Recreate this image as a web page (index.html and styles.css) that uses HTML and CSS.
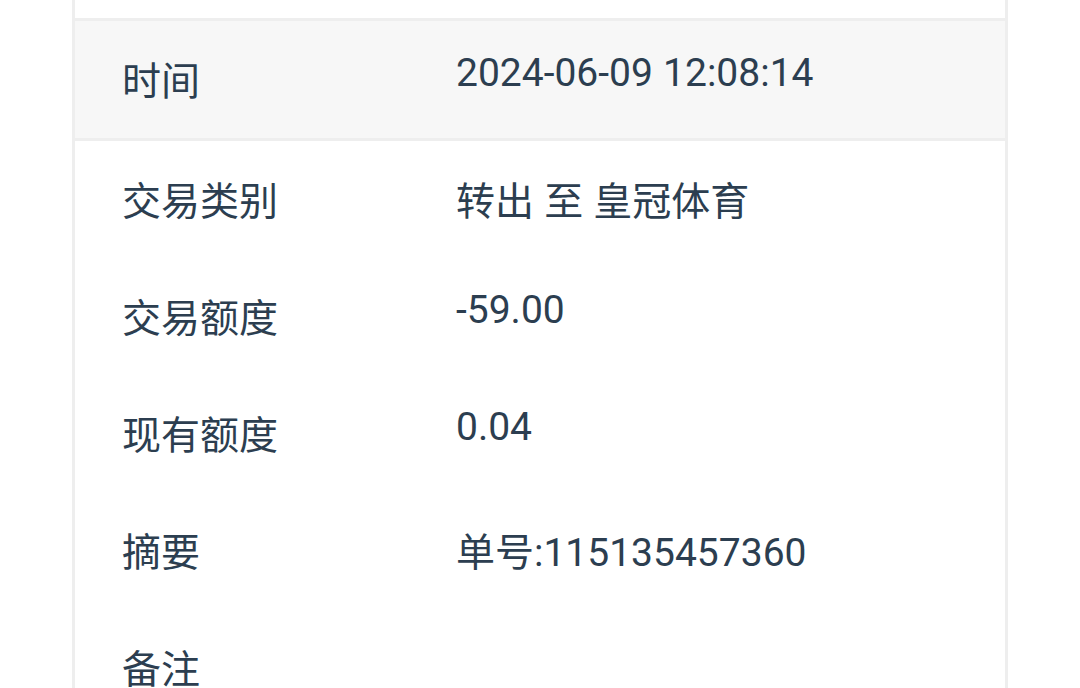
FILE: index.html
```html
<!DOCTYPE html>
<html lang="zh-CN">
<head>
<meta charset="utf-8">
<title>交易详情</title>
<link rel="stylesheet" href="styles.css">
</head>
<body>
<div class="card">
  <div class="top-gap"></div>
  <div class="row head"><div class="label">时间</div><div class="value">2024-06-09 12:08:14</div></div>
  <div class="row"><div class="label">交易类别</div><div class="value">转出 至 皇冠体育</div></div>
  <div class="row"><div class="label">交易额度</div><div class="value">-59.00</div></div>
  <div class="row"><div class="label">现有额度</div><div class="value">0.04</div></div>
  <div class="row"><div class="label">摘要</div><div class="value">单号:115135457360</div></div>
  <div class="row"><div class="label">备注</div><div class="value"></div></div>
</div>
</body>
</html>
```

FILE: styles.css
```css
html, body {
  margin: 0;
  padding: 0;
  background: #ffffff;
  overflow: hidden;
}

body {
  font-family: "Roboto", "Noto Sans CJK SC", sans-serif;
  font-size: 39px;
  color: #2c3e50;
}

.card {
  margin-left: 72px;
  width: 936px;
  box-sizing: border-box;
  border-left: 3px solid #eeeeee;
  border-right: 3px solid #eeeeee;
}

.top-gap {
  height: 18px;
}

.row {
  display: flex;
  align-items: flex-start;
  box-sizing: border-box;
  height: 117px;
  padding-top: 29px;
}

.row.head {
  height: 123px;
  background: #f7f7f7;
  border-top: 3px solid #eeeeee;
  border-bottom: 3px solid #eeeeee;
}

.label {
  width: 381px;
  flex: none;
  box-sizing: border-box;
  padding-left: 47px;
  line-height: normal;
}

.value {
  flex: 1;
  line-height: normal;
  word-spacing: 0.5px;
}
```
